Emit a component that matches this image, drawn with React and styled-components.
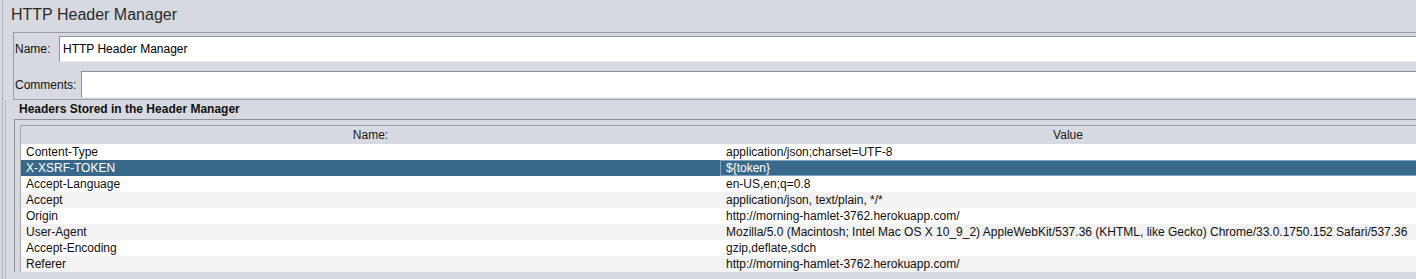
import React from "react";
import styled, { createGlobalStyle } from "styled-components";

const GlobalStyle = createGlobalStyle`
  html, body {
    margin: 0;
    padding: 0;
    overflow: hidden;
    background: #d6d9df;
  }
  body {
    font-family: "Liberation Sans", Arial, sans-serif;
    font-size: 12px;
    color: #000;
  }
`;

const Panel = styled.div`
  margin-left: 2px;
  height: 279px;
  border-left: 1px solid #aeb2b9;
  background: #d6d9df;
  overflow: hidden;
`;

const Title = styled.div`
  height: 30px;
  line-height: 30px;
  margin-bottom: 2px;
  padding-left: 8px;
  font-size: 16px;
  color: #2b2b2b;
  white-space: nowrap;
`;

const InfoBox = styled.div`
  margin-left: 10px;
  border: 1px solid #9a9da3;
  border-right: none;
  padding: 3px 0 1px 1px;
  display: flex;
  flex-direction: column;
  gap: 9px;
`;

const FieldRow = styled.div`
  display: flex;
  align-items: stretch;
  height: ${(p) => p.$h}px;
`;

const Label = styled.label`
  width: ${(p) => p.$w}px;
  flex: none;
  display: flex;
  align-items: center;
  padding-left: 0;
  color: #111;
`;

const Input = styled.div`
  flex: 1;
  background: #fff;
  border: 1px solid #8f9399;
  border-right: none;
  border-bottom-color: #e9eaec;
  padding-left: 3px;
  display: flex;
  align-items: center;
  white-space: nowrap;
`;

const Section = styled.div`
  margin-left: 2px;
  border-left: 1px solid #b4b8be;
  height: 200px;
`;

const SectionTitle = styled.div`
  height: 19px;
  line-height: 19px;
  padding-left: 13px;
  font-weight: bold;
  color: #111;
`;

const TableFrame = styled.div`
  margin-left: 8px;
  border-top: 1px solid #8d9096;
  border-left: 1px solid #8d9096;
  padding: 5px 0 0 5px;
`;

const Table = styled.div`
  border-top: 1px solid #9b9ea4;
  border-left: 1px solid #a6a9ae;
`;

const Row = styled.div`
  display: grid;
  grid-template-columns: 699px 1fr;
  height: ${(p) => (p.$head ? 18 : 16)}px;
  line-height: ${(p) => (p.$head ? 18 : 16)}px;
  background: ${(p) =>
    p.$head ? "#d7dae0" : p.$selected ? "#39698a" : p.$odd ? "#f2f2f2" : "#ffffff"};
  color: ${(p) => (p.$selected ? "#ffffff" : "#111")};
`;

const HeadCell = styled.div`
  text-align: center;
  white-space: nowrap;
  color: #1a1a1a;
`;

const Cell = styled.div`
  padding-left: ${(p) => (p.$value ? 6 : 5)}px;
  white-space: nowrap;
  overflow: hidden;
  box-shadow: ${(p) => (p.$focus ? "inset 1px 1px 0 #7fa3c0, inset 0 -1px 0 #7fa3c0" : "none")};
`;

const headers = [
  ["Content-Type", "application/json;charset=UTF-8"],
  ["X-XSRF-TOKEN", "${token}"],
  ["Accept-Language", "en-US,en;q=0.8"],
  ["Accept", "application/json, text/plain, */*"],
  ["Origin", "http://morning-hamlet-3762.herokuapp.com/"],
  [
    "User-Agent",
    "Mozilla/5.0 (Macintosh; Intel Mac OS X 10_9_2) AppleWebKit/537.36 (KHTML, like Gecko) Chrome/33.0.1750.152 Safari/537.36",
  ],
  ["Accept-Encoding", "gzip,deflate,sdch"],
  ["Referer", "http://morning-hamlet-3762.herokuapp.com/"],
];

const selectedRow = 1;

export default function App() {
  return (
    <>
      <GlobalStyle />
      <Panel>
        <Title>HTTP Header Manager</Title>
        <InfoBox>
          <FieldRow $h={26}>
            <Label $w={44}>Name:</Label>
            <Input>HTTP Header Manager</Input>
          </FieldRow>
          <FieldRow $h={27}>
            <Label $w={66}>Comments:</Label>
            <Input />
          </FieldRow>
        </InfoBox>
        <Section>
          <SectionTitle>Headers Stored in the Header Manager</SectionTitle>
          <TableFrame>
            <Table>
              <Row $head>
                <HeadCell>Name:</HeadCell>
                <HeadCell>Value</HeadCell>
              </Row>
              {headers.map(([name, value], i) => (
                <Row key={name} $odd={i % 2 === 1} $selected={i === selectedRow}>
                  <Cell>{name}</Cell>
                  <Cell $value $focus={i === selectedRow}>
                    {value}
                  </Cell>
                </Row>
              ))}
            </Table>
          </TableFrame>
        </Section>
      </Panel>
    </>
  );
}
